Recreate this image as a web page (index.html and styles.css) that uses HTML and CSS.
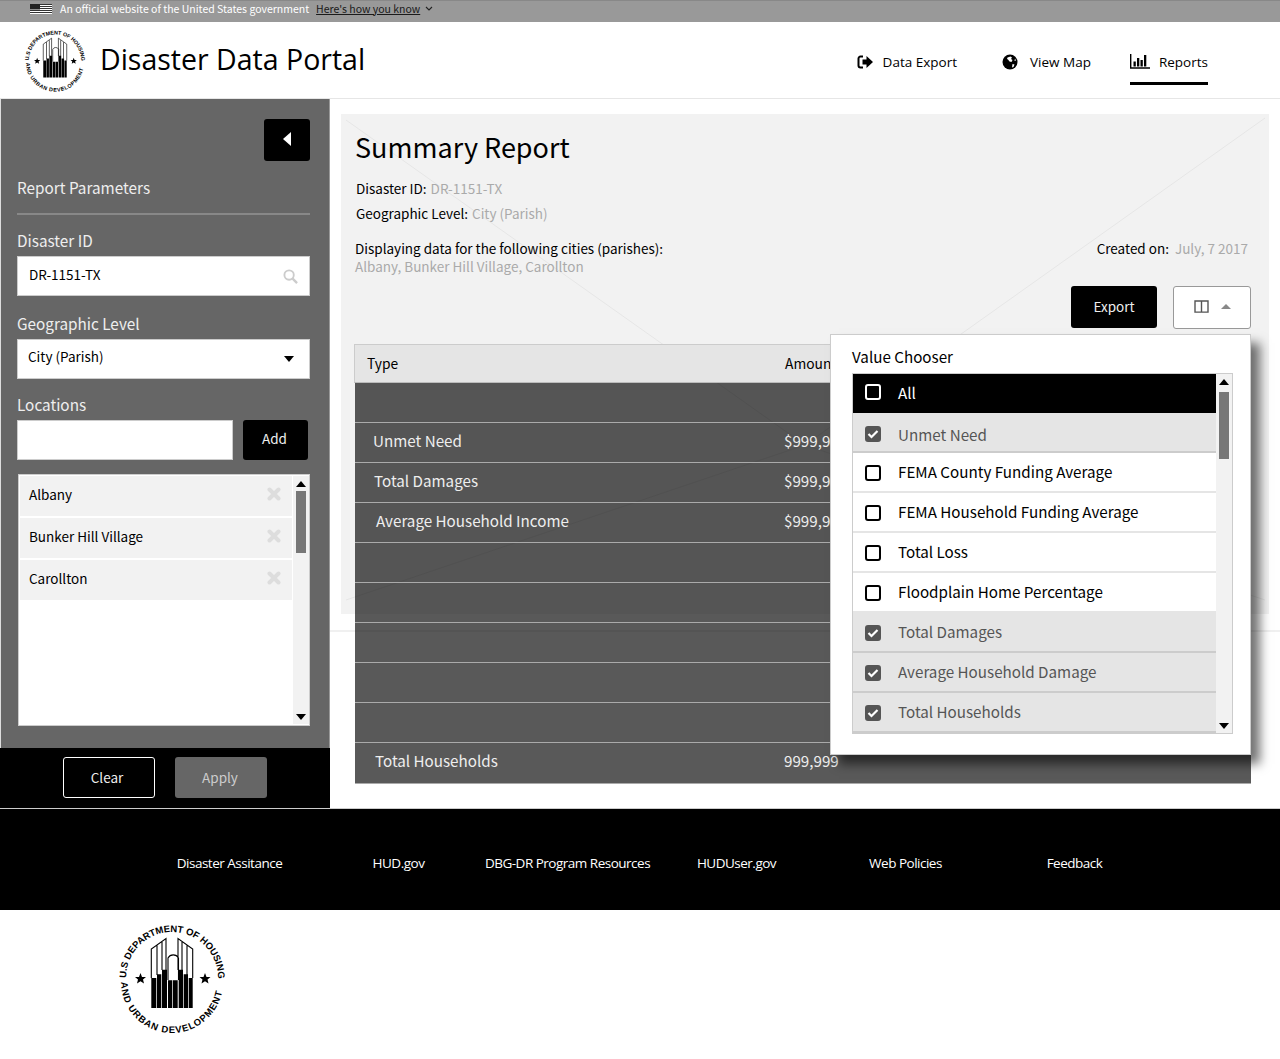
FILE: index.html
```html
<!DOCTYPE html>
<html lang="en">
<head>
  <meta charset="UTF-8" />
  <meta name="viewport" content="width=device-width, initial-scale=1.0" />
  <title>Summary Report | Disaster Data Portal</title>
  <link rel="stylesheet" href="styles.css">
</head>
<body>

  <!-- Seal, used in the header and under the footer -->
  <svg class="sprite" aria-hidden="true">
    <symbol id="seal" viewBox="-60 -60 120 120">
      <path id="sealTop" d="M-46,1 A46,46 0 0 1 46,1" fill="none" />
      <path id="sealBottom" d="M-51,5 A51,51 0 0 0 51,5" fill="none" />
      <text class="seal-text"><textPath href="#sealTop" textLength="145">U.S DEPARTMENT OF HOUSING</textPath></text>
      <text class="seal-text"><textPath href="#sealBottom" textLength="150">AND URBAN DEVELOPMENT</textPath></text>
      <polygon points="-31.5,-4 -30,0 -26,0 -29,2.6 -28,6.6 -31.5,4.2 -35,6.6 -34,2.6 -37,0 -33,0" />
      <polygon points="33,-4 34.5,0 38.5,0 35.5,2.6 36.5,6.6 33,4.2 29.5,6.6 30.5,2.6 27.5,0 31.5,0" />
      <path d="M-20.7 1v-29L-6-38.5V-7M-15-2v-29.5M-10-7v-28M20.7 1v-29L6-38.5V-7M15-2v-29.5M10-7v-28M-4 3V-19a6 6 0 0 1 10.5 0V3" fill="none" stroke="#000" stroke-width="1.1" />
      <path d="M-20.7 1h5v30h-5zM-15-2.7h4.3V31H-15zM-10-7.3h5V31h-5zM-4 3.3H.3V31H-4zM1 3.3h4.7V31H1zM6.7-7.3H11V31H6.7zM11.7-2.7H16V31h-4.3zM16.7 1h4v30h-4z" />
    </symbol>
  </svg>

  <div class="gov-banner">
    <svg class="flag" viewBox="0 0 22 10" width="22" height="10">
      <rect width="22" height="10" fill="#fff" />
      <path d="M0 .5h22M0 2.5h22M0 4.5h22M0 6.5h22M0 8.5h22" stroke="#333" stroke-width="1" />
      <rect width="10" height="5.5" fill="#222" />
    </svg>
    <span class="gov-text">An official website of the United States government</span>
    <a class="gov-link">Here's how you know</a>
    <svg class="gov-chevron" viewBox="0 0 8 5" width="8" height="5"><path d="M1 1l3 3 3-3" fill="none" stroke="#222" stroke-width="1.1" /></svg>
  </div>

  <header class="navbar">
    <svg class="logo"><use href="#seal" /></svg>
    <div class="site-title">Disaster Data Portal</div>
    <nav class="nav-links">
      <a class="nav-link nav-export">
        <svg class="nav-icon" viewBox="0 0 16 14" width="16" height="14">
          <path d="M6 1.5H3.5A2 2 0 0 0 1.5 3.5v7a2 2 0 0 0 2 2H6" fill="none" stroke="#000" stroke-width="2" />
          <path d="M5.500 4.500H9.500V1L16 7l-6.500 6V9.500H5.500z" />
        </svg>
        Data Export
      </a>
      <a class="nav-link nav-map">
        <svg class="nav-icon" viewBox="0 0 16 16" width="16" height="16">
          <circle cx="8" cy="8" r="7.5" />
          <path d="M5.500 3.500l3-1 1.500 1-1 1.500 1.500 1-1 2-2-.5-1.500-2-1-.5zM10.500 10l2 .5-1 2.500-1.500.5zM13 4.500l1 2-1.500.5z" fill="#fff" />
        </svg>
        View Map
      </a>
      <a class="nav-link active">
        <svg class="nav-icon" viewBox="0 0 20 15" width="20" height="15">
          <path d="M.7 0v14H20" fill="none" stroke="#000" stroke-width="1.4" />
          <path d="M3.500 7.500h2.300v5h-2.300zM7 4h2.300v8.500H7zM10.500 6h2.300v6.500h-2.300zM14 1h2.300v11.500H14z" />
        </svg>
        Reports
      </a>
    </nav>
  </header>

  <main class="main">
    <aside class="sidebar">
      <div class="sidebar-body">
        <div class="toggle-row">
          <button class="btn btn-toggle"><span class="arrow-left"></span></button>
        </div>
        <h2 class="sidebar-title">Report Parameters</h2>
        <label class="field-label">Disaster ID</label>
        <div class="text-field">
          DR-1151-TX
          <svg viewBox="0 0 16 16" width="15" height="15"><circle cx="6.5" cy="6.5" r="5" fill="none" stroke="#ccc" stroke-width="2" /><path d="M10 10l5 5" stroke="#ccc" stroke-width="2.5" /></svg>
        </div>
        <label class="field-label">Geographic Level</label>
        <div class="text-field select-field">
          City (Parish)
          <span class="arrow-down"></span>
        </div>
        <label class="field-label">Locations</label>
        <div class="add-row">
          <div class="text-field add-input"></div>
          <button class="btn btn-add">Add</button>
        </div>
        <div class="location-box">
          <ul class="location-list">
            <li>Albany <svg class="remove" viewBox="0 0 14 14"><path d="M2.5 2.5l9 9M11.5 2.5l-9 9" /></svg></li>
            <li>Bunker Hill Village <svg class="remove" viewBox="0 0 14 14"><path d="M2.5 2.5l9 9M11.5 2.5l-9 9" /></svg></li>
            <li>Carollton <svg class="remove" viewBox="0 0 14 14"><path d="M2.5 2.5l9 9M11.5 2.5l-9 9" /></svg></li>
          </ul>
          <div class="scrollbar">
            <span class="sb-up"></span>
            <span class="sb-thumb sb-thumb-short"></span>
            <span class="sb-down"></span>
          </div>
        </div>
      </div>
      <div class="sidebar-actions">
        <button class="btn btn-clear">Clear</button>
        <button class="btn btn-apply">Apply</button>
      </div>
    </aside>

    <section class="content">
      <div class="panel">
        <!-- placeholder cross behind the report -->
        <svg class="panel-cross" width="928" height="500">
          <path d="M5 6L464 331M924 4L464 331M5 486L464 331M924 486L464 331" fill="none" stroke="#e6e6e6" stroke-width="1" />
        </svg>
        <h1 class="report-title">Summary Report</h1>
        <p class="meta meta-id"><span>Disaster ID:</span> <em>DR-1151-TX</em></p>
        <p class="meta meta-level"><span>Geographic Level:</span> <em>City (Parish)</em></p>
        <div class="meta-row">
          <div>
            <p class="meta"><span>Displaying data for the following cities (parishes):</span></p>
            <p class="meta meta-cities"><em>Albany, Bunker Hill Village, Carollton</em></p>
          </div>
          <p class="meta meta-created"><span>Created on:</span> <em>July, 7 2017</em></p>
        </div>
        <div class="report-actions">
          <button class="btn btn-export">Export</button>
          <button class="btn btn-columns">
            <svg viewBox="0 0 16 14" width="15" height="13"><path d="M1 1h14v12H1zM8 1v12" fill="none" stroke="#555" stroke-width="1.5" /></svg>
            <span class="arrow-up"></span>
          </button>
        </div>

        <div class="report-table">
          <div class="table-head"><span class="col-type">Type</span><span>Amount</span></div>
          <div class="table-row"></div>
          <div class="table-row"><span class="col-type">Unmet Need</span><span>$999,999</span></div>
          <div class="table-row row-b"><span class="col-type">Total Damages</span><span>$999,999</span></div>
          <div class="table-row row-c"><span class="col-type">Average Household Income</span><span>$999,999</span></div>
          <div class="table-row"></div>
          <div class="table-row"></div>
          <div class="table-row"></div>
          <div class="table-row"></div>
          <div class="table-row"></div>
          <div class="table-row row-d"><span class="col-type">Total Households</span><span>999,999</span></div>
        </div>

        <div class="chooser">
          <div class="chooser-title">Value Chooser</div>
          <div class="chooser-box">
            <ul class="chooser-list">
              <li class="all"><span class="check"></span>All</li>
              <li class="on first-on"><span class="check"><svg viewBox="0 0 12 10"><path d="M1.5 5l3 3 6-6" /></svg></span>Unmet Need</li>
              <li><span class="check"></span>FEMA County Funding Average</li>
              <li><span class="check"></span>FEMA Household Funding Average</li>
              <li><span class="check"></span>Total Loss</li>
              <li><span class="check"></span>Floodplain Home Percentage</li>
              <li class="on"><span class="check"><svg viewBox="0 0 12 10"><path d="M1.5 5l3 3 6-6" /></svg></span>Total Damages</li>
              <li class="on"><span class="check"><svg viewBox="0 0 12 10"><path d="M1.5 5l3 3 6-6" /></svg></span>Average Household Damage</li>
              <li class="on"><span class="check"><svg viewBox="0 0 12 10"><path d="M1.5 5l3 3 6-6" /></svg></span>Total Households</li>
            </ul>
            <div class="scrollbar">
              <span class="sb-up"></span>
              <span class="sb-thumb"></span>
              <span class="sb-down"></span>
            </div>
          </div>
        </div>
      </div>
    </section>
  </main>

  <footer class="footer">
    <a>Disaster Assitance</a>
    <a>HUD.gov</a>
    <a>DBG-DR Program Resources</a>
    <a>HUDUser.gov</a>
    <a>Web Policies</a>
    <a>Feedback</a>
  </footer>

  <div class="seal-row">
    <svg class="seal-large"><use href="#seal" /></svg>
  </div>

</body>
</html>
```
FILE: styles.css
```css
/* General Body and Layout */
* {
  box-sizing: border-box;
}

body {
  font-family: "Noto Sans CJK SC", "Noto Sans", sans-serif;
  margin: 0;
  padding: 0;
  background-color: #fff;
  color: #000;
  height: 1059px;
  overflow: hidden;
}

p, h1, h2, ul {
  margin: 0;
  padding: 0;
  font-weight: normal;
}

ul {
  list-style: none;
}

button {
  font-family: inherit;
  cursor: pointer;
}

.sprite {
  position: absolute;
  width: 0;
  height: 0;
}

.seal-text {
  font-family: "Liberation Sans", sans-serif;
  font-size: 9.5px;
  font-weight: bold;
}

/* Gov Banner */
.gov-banner {
  height: 22px;
  background-color: #999;
  display: flex;
  align-items: center;
  padding: 0 0 6px 30px;
  font-size: 10.5px;
  line-height: 14px;
  color: #fff;
  border-top: 1px solid #888;
}

.flag {
  margin-right: 8px;
}

.gov-link {
  margin-left: 7px;
  color: #1a1a1a;
  text-decoration: underline;
}

.gov-chevron {
  margin-left: 5px;
}

/* Header */
.navbar {
  height: 77px;
  display: flex;
  align-items: center;
  padding-left: 21px;
  border-bottom: 1px solid #e6e6e6;
}

.logo {
  width: 68px;
  height: 68px;
  margin-top: -1px;
}

.site-title {
  font-family: "Open Sans", sans-serif;
  font-size: 28.5px;
  line-height: 40px;
  margin-left: 11px;
  margin-top: -3px;
}

.nav-links {
  margin-left: auto;
  margin-right: 72px;
  display: flex;
  align-self: stretch;
  align-items: stretch;
}

.nav-link {
  display: flex;
  align-items: center;
  font-family: "Open Sans", sans-serif;
  font-size: 13.5px;
  height: 63px;
  padding-top: 19px;
  border-bottom: 3px solid transparent;
}

.nav-export {
  margin-right: 45px;
}

.nav-map {
  margin-right: 39px;
}

.nav-icon {
  margin-right: 10px;
}

.nav-map .nav-icon {
  margin-right: 12px;
}

.nav-link.active {
  border-bottom-color: #000;
}

.nav-link.active .nav-icon {
  margin-right: 9px;
}

/* Main */
.main {
  height: 709px;
  display: flex;
}

/* Sidebar */
.sidebar {
  width: 330px;
  flex-shrink: 0;
  display: flex;
  flex-direction: column;
  background-color: #666;
  border-left: 1px solid #ddd;
  border-right: 1px solid #999;
  color: #eee;
}

.sidebar-body {
  flex: 1;
  padding: 20px 19px 0 16px;
}

.toggle-row {
  display: flex;
  justify-content: flex-end;
}

.btn {
  border: none;
  border-radius: 3px;
  background-color: #000;
  color: #eee;
  font-size: 13.5px;
  line-height: 20px;
  padding: 0 0 2px;
}

.btn-toggle {
  width: 46px;
  height: 42px;
  display: flex;
  align-items: center;
  justify-content: center;
}

.arrow-left {
  border-top: 7px solid transparent;
  border-bottom: 7px solid transparent;
  border-right: 8px solid #fff;
}

.sidebar-title {
  font-size: 15.3px;
  line-height: 20px;
  margin-top: 16px;
  padding-bottom: 16px;
  border-bottom: 2px solid #888;
}

.field-label {
  display: block;
  font-size: 15.3px;
  line-height: 20px;
  margin: 17px 0 6px;
}

.sidebar-title + .field-label {
  margin-top: 15px;
}

.field-label:nth-of-type(3) {
  margin-top: 15px;
}

.text-field {
  height: 40px;
  background-color: #fff;
  border: 1px solid #ccc;
  color: #000;
  display: flex;
  align-items: center;
  justify-content: space-between;
  padding: 0 11px 5px;
  font-size: 13.5px;
  line-height: 20px;
}

.text-field svg {
  flex-shrink: 0;
  margin-top: 6px;
}

.select-field {
  padding: 0 11px 7px 10px;
}

.arrow-down {
  flex-shrink: 0;
  border-left: 5px solid transparent;
  border-right: 5px solid transparent;
  border-top: 6px solid #000;
  margin: 7px 4px 0 0;
}

.add-row {
  display: flex;
  justify-content: space-between;
}

.add-input {
  width: 216px;
}

.btn-add {
  width: 65px;
  height: 40px;
  margin-right: 2px;
  padding: 0 2px 4px 0;
}

.location-box {
  height: 252px;
  margin: 14px 0 0 1px;
  display: flex;
  justify-content: space-between;
  background-color: #fff;
  border: 1px solid #ccc;
  padding: 1px 0 1px 1px;
}

.location-list {
  width: 272px;
}

.location-list li {
  height: 40px;
  margin-bottom: 2px;
  background-color: #f2f2f2;
  display: flex;
  align-items: center;
  justify-content: space-between;
  padding: 0 11px 4px 9px;
  font-size: 13.5px;
  line-height: 20px;
  color: #000;
}

.remove {
  width: 14px;
  height: 14px;
  fill: none;
  stroke: #ddd;
  stroke-width: 4;
  stroke-linecap: round;
}

.scrollbar {
  width: 16px;
  background-color: #f2f2f2;
  display: flex;
  flex-direction: column;
  align-items: center;
  padding: 5px 0 4px;
}

.sb-up,
.sb-down {
  border-left: 5px solid transparent;
  border-right: 5px solid transparent;
}

.sb-up {
  border-bottom: 6px solid #000;
}

.sb-down {
  border-top: 6px solid #000;
  margin-top: auto;
}

.sb-thumb {
  width: 10px;
  height: 67px;
  margin-top: 7px;
  background-color: #777;
}

.sb-thumb-short {
  height: 62px;
  margin-top: 4px;
}

.sidebar-actions {
  height: 60px;
  margin: 0 -1px;
  background-color: #000;
  display: flex;
  align-items: flex-start;
  padding: 9px 0 0 63px;
  gap: 20px;
}

.btn-clear,
.btn-apply {
  width: 92px;
  height: 41px;
}

.btn-clear {
  border: 1px solid #fff;
  padding-right: 4px;
}

.btn-apply {
  background-color: #666;
  color: #ccc;
  padding-right: 2px;
}

/* Report Area */
.content {
  flex: 1;
  height: 533px;
  padding: 15px 11px 0;
  border-bottom: 2px solid #f0f0f0;
}

.panel {
  position: relative;
  height: 500px;
  background-color: #f2f2f2;
  padding: 15px 18px 0 13px;
}

.panel-cross {
  position: absolute;
  left: 0;
  top: 0;
}

.panel > *:not(.panel-cross) {
  position: relative;
}

.report-title {
  font-size: 27px;
  line-height: 36px;
  margin-left: 1px;
}

.meta {
  font-size: 13.5px;
  line-height: 18px;
  color: #000;
}

.meta em {
  font-style: normal;
  color: #aaa;
  margin-left: 1px;
}

.meta-id {
  margin: 14px 0 0 2px;
}

.meta-level {
  margin: 7px 0 0 2px;
}

.meta-row {
  display: flex;
  justify-content: space-between;
  margin: 17px 3px 0 1px;
}

.meta-cities em {
  margin-left: 0;
}

.meta-created em {
  margin-left: 3px;
}

.report-actions {
  display: flex;
  justify-content: flex-end;
  gap: 16px;
  margin-top: 11px;
}

.btn-export {
  width: 86px;
  height: 42px;
}

.btn-columns {
  width: 78px;
  height: 43px;
  background-color: #fff;
  border: 1px solid #999;
  display: flex;
  align-items: center;
  justify-content: center;
  gap: 12px;
}

.arrow-up {
  border-left: 5px solid transparent;
  border-right: 5px solid transparent;
  border-bottom: 5px solid #888;
}

/* Report Table */
.report-table {
  margin-top: 15px;
  font-size: 15.2px;
  line-height: 22px;
}

.table-head {
  height: 39px;
  display: flex;
  align-items: center;
  background-color: #e5e5e5;
  border: 1px solid #ccc;
  border-bottom: 1px solid #bbb;
  padding: 0 0 2px 12px;
  font-size: 13.8px;
}

.table-head .col-type {
  width: 418px;
}

.table-row {
  height: 40px;
  margin-left: 1px;
  display: flex;
  align-items: center;
  background-color: rgba(0, 0, 0, 0.65);
  border-bottom: 1px solid #aaa;
  padding: 0 0 6px 18px;
  color: #eee;
}

.table-row:last-child {
  height: 41px;
}

.table-row .col-type {
  width: 411px;
}

.row-b {
  padding-left: 19px;
}

.row-b .col-type {
  width: 410px;
}

.row-c {
  padding-left: 21px;
}

.row-c .col-type {
  width: 408px;
}

.row-d {
  padding-left: 20px;
}

.row-d .col-type {
  width: 409px;
}

/* Value Chooser */
.panel .chooser {
  position: absolute;
  left: 489px;
  top: 220px;
  width: 421px;
  height: 421px;
  background-color: #fff;
  border: 1px solid #ccc;
  box-shadow: 9px 9px 10px rgba(0, 0, 0, 0.55);
  padding: 10px 17px 0 21px;
}

.chooser-title {
  font-size: 15.2px;
  line-height: 22px;
}

.chooser-box {
  height: 361px;
  margin-top: 6px;
  display: flex;
  justify-content: space-between;
  border: 1px solid #ccc;
}

.chooser-list {
  flex: 1;
}

.chooser-list li {
  height: 40px;
  display: flex;
  align-items: center;
  gap: 17px;
  padding: 0 0 2px 12px;
  font-size: 15.2px;
  line-height: 22px;
  border-bottom: 2px solid #e5e5e5;
}

.chooser-list li.all {
  height: 39px;
  background-color: #000;
  color: #fff;
  border-bottom: none;
  padding-bottom: 4px;
}

.chooser-list li.on {
  background-color: #e5e5e5;
  color: #555;
  border-bottom-color: #ccc;
}

.chooser-list li.first-on {
  padding: 3px 0 0 12px;
}

.check {
  width: 16px;
  height: 16px;
  flex-shrink: 0;
  margin-top: 4px;
  border: 2px solid #000;
  border-radius: 3px;
  background-color: #fff;
  display: flex;
  align-items: center;
  justify-content: center;
}

.all .check {
  margin-top: 0;
  border-color: #fff;
  background-color: #000;
}

.on .check {
  border-color: #555;
  background-color: #555;
}

.first-on .check {
  margin-top: 0;
}

.check svg {
  width: 12px;
  height: 10px;
  fill: none;
  stroke: #fff;
  stroke-width: 2.2;
}

/* Footer */
.footer {
  height: 102px;
  background-color: #000;
  border-top: 1px solid #ccc;
  display: grid;
  grid-template-columns: repeat(6, 169px);
  align-items: center;
  justify-items: center;
  padding: 6px 0 0 145px;
  color: #fff;
  font-family: "Open Sans", sans-serif;
  font-size: 13.5px;
  letter-spacing: -0.5px;
}

/* Bottom Seal */
.seal-row {
  padding: 7px 0 0 112px;
}

.seal-large {
  width: 120px;
  height: 120px;
}
```
